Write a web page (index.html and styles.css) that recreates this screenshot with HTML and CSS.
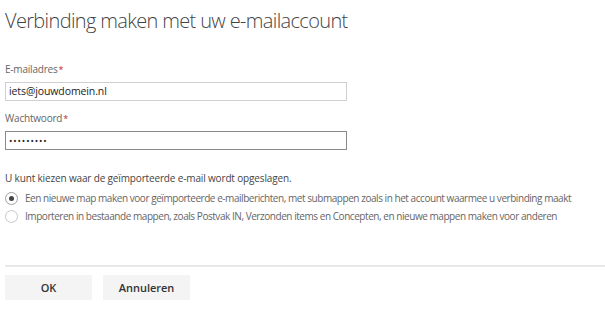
FILE: index.html
```html
<!DOCTYPE html>
<html lang="nl">
<head>
<meta charset="utf-8">
<title>Verbinding maken</title>
<link rel="stylesheet" href="styles.css">
</head>
<body>
<div class="dialog">
  <h1 class="title">Verbinding maken met uw e-mailaccount</h1>
  <div class="field">
    <label class="label">E-mailadres<span class="req">*</span></label>
    <div class="input">iets@jouwdomein.nl</div>
  </div>
  <div class="field">
    <label class="label">Wachtwoord<span class="req">*</span></label>
    <div class="input input-focus"><span class="dots">•••••••••</span></div>
  </div>
  <p class="intro">U kunt kiezen waar de geïmporteerde e-mail wordt opgeslagen.</p>
  <div class="options">
    <div class="option"><span class="radio checked"></span><span>Een nieuwe map maken voor geïmporteerde e-mailberichten, met submappen zoals in het account waarmee u verbinding maakt</span></div>
    <div class="option"><span class="radio"></span><span>Importeren in bestaande mappen, zoals Postvak IN, Verzonden items en Concepten, en nieuwe mappen maken voor anderen</span></div>
  </div>
  <div class="footer">
    <button class="btn">OK</button>
    <button class="btn">Annuleren</button>
  </div>
</div>
</body>
</html>
```
FILE: styles.css
```css
html, body {
  margin: 0;
  padding: 0;
  background: #fff;
  font-family: "Open Sans", "Liberation Sans", sans-serif;
  color: #333;
}
.dialog {
  padding: 0 0 0 5px;
}
.title {
  margin: 0;
  padding-top: 7px;
  font-size: 20px;
  font-weight: 300;
  line-height: 28px;
  color: #444;
  letter-spacing: -0.65px;
}
.field {
  width: 342px;
}
.field:first-of-type {
  margin-top: 27px;
}
.label {
  display: block;
  font-size: 10px;
  line-height: 14px;
  color: #666;
  letter-spacing: -0.2px;
}
.req {
  color: #c4262e;
  margin-left: 1px;
  font-size: 9px;
}
.input {
  box-sizing: border-box;
  height: 19px;
  margin-top: 5px;
  margin-bottom: 10px;
  border: 1px solid #d0d0d0;
  padding: 0 3px;
  font-size: 10.5px;
  line-height: 17px;
  color: #222;
  letter-spacing: -0.1px;
}
.input-focus {
  border-color: #8a8a8a;
}
.dots {
  font-size: 9px;
  letter-spacing: 0.9px;
  vertical-align: top;
}
.intro {
  margin: 21px 0 0;
  font-size: 10px;
  line-height: 14px;
  color: #444;
  letter-spacing: -0.15px;
}
.options {
  margin-top: 4px;
}
.option {
  display: flex;
  align-items: center;
  gap: 7px;
  height: 18px;
  font-size: 10px;
  color: #666;
  letter-spacing: -0.45px;
  white-space: nowrap;
}
.radio {
  box-sizing: border-box;
  width: 13px;
  height: 13px;
  border: 1px solid #c8c8c8;
  border-radius: 50%;
  display: flex;
  align-items: center;
  justify-content: center;
  flex: none;
}
.radio.checked {
  border-color: #a0a0a0;
}
.radio.checked::after {
  content: "";
  width: 5px;
  height: 5px;
  border-radius: 50%;
  background: #444;
}
.footer {
  margin-top: 40px;
  border-top: 2px solid #e8e8e8;
  padding-top: 8px;
  display: flex;
  gap: 11px;
}
.btn {
  width: 87px;
  height: 25px;
  border: none;
  background: #f4f4f4;
  font-family: inherit;
  font-size: 11px;
  font-weight: 600;
  color: #333;
  padding: 0;
}
```
